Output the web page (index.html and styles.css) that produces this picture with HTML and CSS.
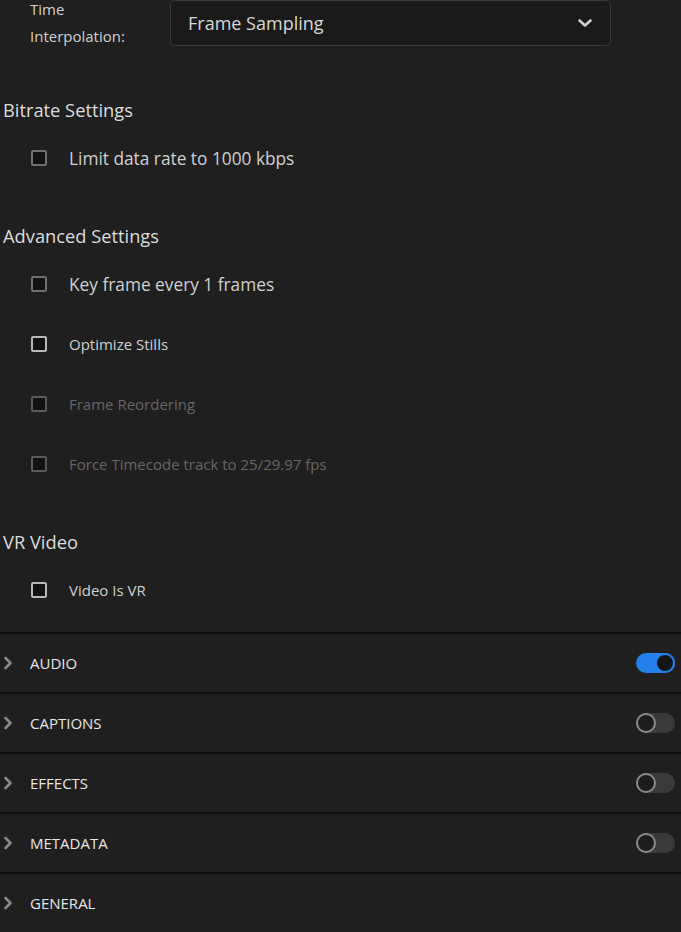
FILE: index.html
```html
<!DOCTYPE html>
<html lang="en">
<head>
    <meta charset="UTF-8">
    <meta name="viewport" content="width=device-width, initial-scale=1.0">
    <title>Export Settings</title>
    <link rel="stylesheet" href="styles.css">
</head>
<body>

<!-- Time interpolation -->
<div class="field-row">
    <div class="field-label">Time<br>Interpolation:</div>
    <div class="select">
        <span>Frame Sampling</span>
        <svg class="select-arrow" width="16" height="10" viewBox="0 0 16 10">
            <path d="M2.5 2.5 L8 7.5 L13.5 2.5" fill="none" stroke="#d0d0d0" stroke-width="2.6" stroke-linecap="round" stroke-linejoin="round"/>
        </svg>
    </div>
</div>

<!-- Bitrate Settings -->
<div class="section">
    <h3>Bitrate Settings</h3>
    <label class="check large"><span class="box"></span>Limit data rate to 1000 kbps</label>
</div>

<!-- Advanced Settings -->
<div class="section">
    <h3>Advanced Settings</h3>
    <label class="check large"><span class="box"></span>Key frame every 1 frames</label>
    <label class="check"><span class="box bright"></span>Optimize Stills</label>
    <label class="check disabled"><span class="box"></span>Frame Reordering</label>
    <label class="check disabled"><span class="box"></span>Force Timecode track to 25/29.97 fps</label>
</div>

<!-- VR Video -->
<div class="section">
    <h3>VR Video</h3>
    <label class="check"><span class="box bright"></span>Video Is VR</label>
</div>

<!-- Collapsed panels -->
<div class="panels">
    <div class="panel">
        <svg class="chev" width="10" height="14" viewBox="0 0 10 14"><path d="M2.5 2 L7.5 7 L2.5 12" fill="none" stroke="#8a8a8a" stroke-width="2.6" stroke-linecap="round" stroke-linejoin="round"/></svg>
        <span class="panel-title">AUDIO</span>
        <span class="toggle on"></span>
    </div>
    <div class="panel">
        <svg class="chev" width="10" height="14" viewBox="0 0 10 14"><path d="M2.5 2 L7.5 7 L2.5 12" fill="none" stroke="#8a8a8a" stroke-width="2.6" stroke-linecap="round" stroke-linejoin="round"/></svg>
        <span class="panel-title">CAPTIONS</span>
        <span class="toggle"></span>
    </div>
    <div class="panel">
        <svg class="chev" width="10" height="14" viewBox="0 0 10 14"><path d="M2.5 2 L7.5 7 L2.5 12" fill="none" stroke="#8a8a8a" stroke-width="2.6" stroke-linecap="round" stroke-linejoin="round"/></svg>
        <span class="panel-title">EFFECTS</span>
        <span class="toggle"></span>
    </div>
    <div class="panel">
        <svg class="chev" width="10" height="14" viewBox="0 0 10 14"><path d="M2.5 2 L7.5 7 L2.5 12" fill="none" stroke="#8a8a8a" stroke-width="2.6" stroke-linecap="round" stroke-linejoin="round"/></svg>
        <span class="panel-title">METADATA</span>
        <span class="toggle"></span>
    </div>
    <div class="panel">
        <svg class="chev" width="10" height="14" viewBox="0 0 10 14"><path d="M2.5 2 L7.5 7 L2.5 12" fill="none" stroke="#8a8a8a" stroke-width="2.6" stroke-linecap="round" stroke-linejoin="round"/></svg>
        <span class="panel-title">GENERAL</span>
    </div>
</div>

</body>
</html>
```

FILE: styles.css
```css
body {
    margin: 0;
    padding: 0;
    background-color: #1f1f1f;
    color: #d4d4d4;
    font-family: "Open Sans", "Noto Sans", sans-serif;
    overflow: hidden;
}
.field-row {
    display: flex;
    align-items: center;
    height: 46px;
    margin-bottom: 46px;
}
.field-label {
    width: 140px;
    padding-left: 30px;
    font-size: 15px;
    line-height: 27px;
    color: #d0d0d0;
    box-sizing: border-box;
}
.select {
    width: 441px;
    height: 46px;
    margin-left: 30px;
    box-sizing: border-box;
    background-color: #1a1a1a;
    border: 1px solid #393939;
    border-radius: 5px;
    display: flex;
    align-items: center;
    justify-content: space-between;
    padding: 0 17px 0 17px;
    font-size: 18px;
    color: #d8d8d8;
}
.select-arrow {
    display: block;
}
.section + .section {
    margin-top: 30px;
}
h3 {
    margin: 0;
    height: 36px;
    line-height: 36px;
    padding-left: 3px;
    font-size: 18.3px;
    font-weight: normal;
    color: #dcdcdc;
}
.check {
    display: flex;
    align-items: center;
    height: 60px;
    padding-left: 31px;
    font-size: 15px;
    color: #d0d0d0;
}
.check.large {
    font-size: 17.3px;
}
.check.disabled {
    color: #666;
}
.box {
    width: 16px;
    height: 16px;
    box-sizing: border-box;
    border: 2px solid #707070;
    border-radius: 2px;
    background-color: #121212;
    margin-right: 22px;
}
.box.bright {
    border-color: #b8b8b8;
}
.check.disabled .box {
    border-color: #5a5a5a;
}
.panels {
    margin-top: 12px;
}
.panel {
    display: flex;
    align-items: center;
    height: 58px;
    border-top: 2px solid #0e0e0e;
    padding: 0 6px 0 3px;
}
.chev {
    display: block;
    margin-right: 17px;
}
.panel-title {
    flex: 1;
    font-size: 15px;
    color: #e6e6e6;
}
.toggle {
    position: relative;
    width: 39px;
    height: 20px;
    border-radius: 10px;
    background-color: #3a3a3a;
}
.toggle::after {
    content: "";
    position: absolute;
    left: 0;
    top: 0;
    width: 20px;
    height: 20px;
    box-sizing: border-box;
    border: 2px solid #8a8a8a;
    border-radius: 50%;
    background-color: #1c1c1c;
}
.toggle.on {
    background-color: #2680eb;
}
.toggle.on::after {
    left: 19px;
    border-color: #2680eb;
    background-color: #151515;
}
```
